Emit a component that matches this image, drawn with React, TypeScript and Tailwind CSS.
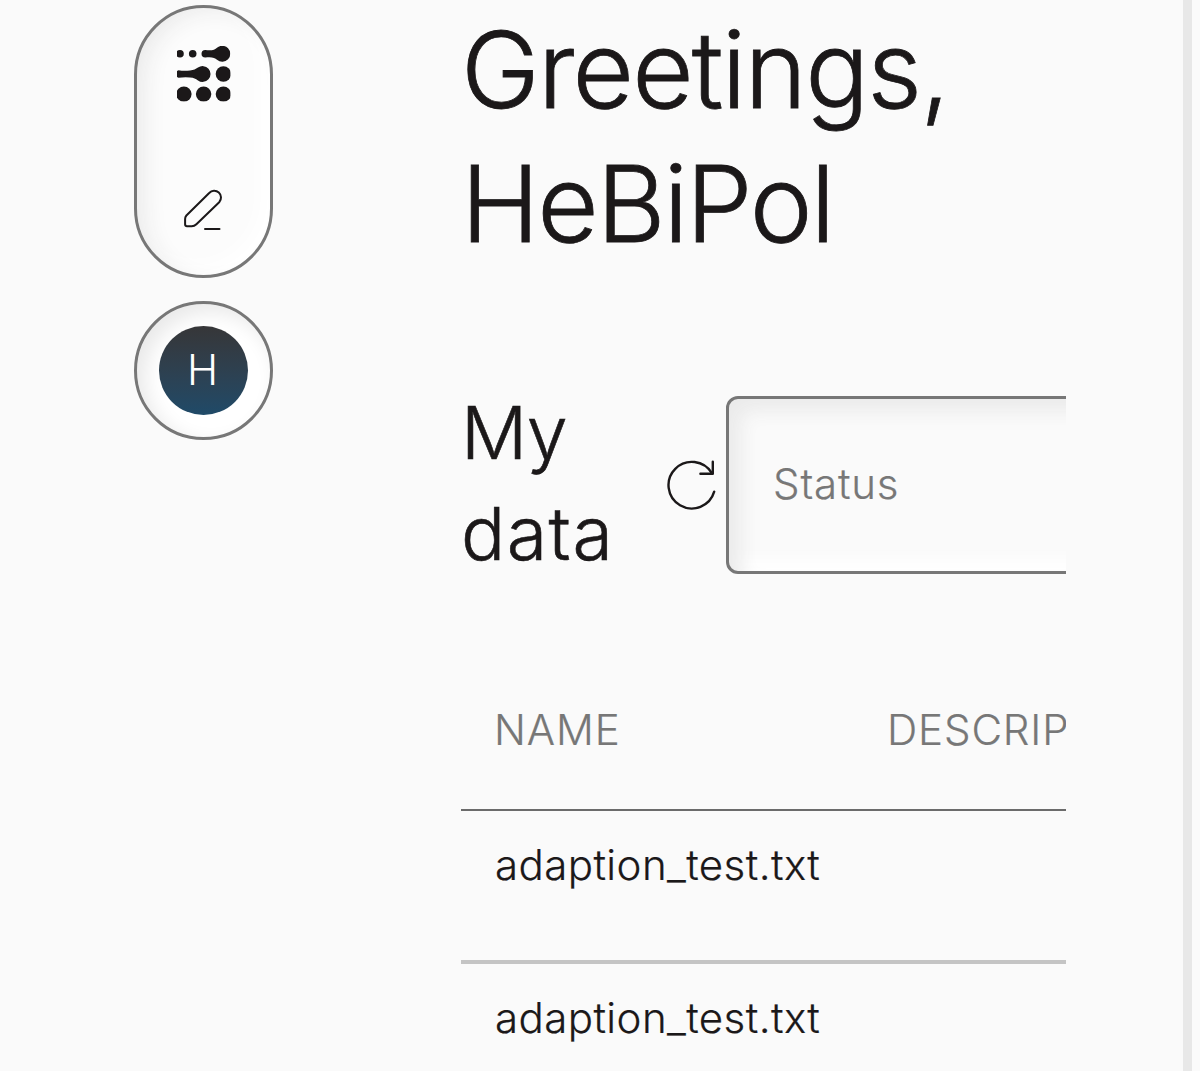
import React from "react";

interface DataFile {
  name: string;
  description: string;
}

const files: DataFile[] = [
  { name: "adaption_test.txt", description: "" },
  { name: "adaption_test.txt", description: "" },
];

function Logo() {
  return (
    <svg width="54" height="56" viewBox="0 0 54 56" className="block text-[#1b1819]" fill="currentColor">
      <clipPath id="logo-edge">
        <rect x="0" y="0" width="53.4" height="55.4" rx="1" />
      </clipPath>
      <g clipPath="url(#logo-edge)">
        <circle cx="3" cy="7.8" r="3.8" />
        <circle cx="15.7" cy="7.8" r="3.8" />
        <path d="M28.3 4C34 4.9 38 4 40 1.8A8 8 0 1 1 40 13.8C38 11.6 34 10.7 28.3 11.6A3.8 3.8 0 0 1 28.3 4Z" />
        <path d="M1.5 24.2Q7 25.2 13 24.4C17 24.2 18.5 23.2 21 21.6A7.9 7.9 0 1 1 21 34.4C18.5 32.6 17 31.6 13 31.4Q7 30.8 1.5 31.8L0 31V25Z" />
        <circle cx="46.4" cy="28" r="7.7" />
        <circle cx="6.9" cy="48.1" r="7.7" />
        <circle cx="26.6" cy="48.1" r="7.7" />
        <circle cx="46.4" cy="48.1" r="7.7" />
      </g>
    </svg>
  );
}

function PencilIcon() {
  return (
    <svg
      width="40"
      height="44"
      viewBox="0 0 40 44"
      className="block"
      fill="none"
      stroke="#1b1819"
      strokeWidth="2"
      strokeLinecap="round"
      strokeLinejoin="round"
    >
      <path d="M3.4 27.5L26.2 5A6.5 6.5 0 0 1 36.2 14.2L13.4 36.2Q11.3 38.2 8.7 38.2H4Q2.2 38.2 2.1 36.4V30.9Q2.1 29 3.4 27.5Z" />
      <path d="M22 41H36.5" />
    </svg>
  );
}

function RefreshIcon() {
  return (
    <svg
      width="52"
      height="52"
      viewBox="0 0 52 52"
      className="block"
      fill="none"
      stroke="#1b1819"
      strokeWidth="2.4"
      strokeLinecap="round"
      strokeLinejoin="round"
    >
      <path d="M49.2 33.7A23.3 23.3 0 1 1 46.8 15.2" />
      <path d="M47.8 3.7V15.7H35.4" />
    </svg>
  );
}

function Sidebar() {
  return (
    <nav className="flex w-[139px] shrink-0 flex-col gap-[23px] pt-[5px]">
      <div className="flex h-[273px] flex-col items-center rounded-full border-3 border-[#777] bg-[#fcfcfc] pt-[38px] shadow-[inset_12px_6px_24px_-6px_#e9e9e9,inset_-9px_-9px_20px_#fff]">
        <Logo />
        <div className="mt-[86px] mr-[2px]">
          <PencilIcon />
        </div>
      </div>
      <div className="flex h-[139px] items-center justify-center rounded-full border-3 border-[#777] bg-white shadow-[inset_8px_8px_20px_#e9e9e9]">
        <div className="flex size-[89px] items-center justify-center rounded-full bg-linear-to-b from-[#363638] to-[#1f4a68] pr-[2px] pb-[2px] text-[42px] leading-none font-light text-white">
          H
        </div>
      </div>
    </nav>
  );
}

function DataTable() {
  return (
    <div className="mt-[65px] w-[900px] text-[42px] font-light">
      <div className="flex h-[162px] items-center border-b-2 border-[#6b6b6b] pl-[33px] text-[#777] [-webkit-text-stroke:0.2px]">
        <span className="w-[393px] shrink-0 tracking-[0.021em]">NAME</span>
        <span className="tracking-[0.021em]">DESCRIPTION</span>
      </div>
      {files.map((file, i) => (
        <div
          key={i}
          className="flex h-[153px] border-b-4 border-[#c4c4c4] pt-[27px] pl-[34px] leading-[54px] text-[#1b1819] [-webkit-text-stroke:0.2px]"
        >
          <span className="w-[393px] shrink-0 tracking-[0.010em]">{file.name}</span>
          <span>{file.description}</span>
        </div>
      ))}
    </div>
  );
}

export default function App() {
  return (
    <div className="flex h-[1071px] w-[1200px] overflow-hidden bg-[#fafafa] pl-[134px] font-['Inter',sans-serif] text-[#1b1819]">
      <Sidebar />
      <main className="ml-[188px] w-[605px] shrink-0 overflow-hidden pt-[3px]">
        <h1 className="w-[560px] text-[106px] leading-[134px] font-light tracking-[-0.020em] [-webkit-text-stroke:0.8px]">
          <span className="tracking-[-0.017em]">Greetings,</span>
          <br />
          HeBiPol
        </h1>

        <div className="mt-[112px] flex w-[900px] items-center">
          <h2 className="w-[204px] shrink-0 text-[73.5px] leading-[100.5px] font-light tracking-[-0.010em] [-webkit-text-stroke:0.6px]">
            My
            <br />
            <span className="tracking-[0.020em]">data</span>
          </h2>
          <RefreshIcon />
          <div className="relative top-[1px] ml-[9px] flex h-[178px] flex-1 items-center rounded-[12px] border-3 border-[#777] pb-[2px] pl-[44px] text-[42px] font-light tracking-[0.020em] text-[#777] shadow-[inset_12px_12px_18px_#ebebeb,inset_-12px_-12px_18px_#fff] [-webkit-text-stroke:0.2px]">
            Status
          </div>
        </div>

        <DataTable />
      </main>
      <div className="ml-auto w-[17px] shrink-0 border-l-[9px] border-[#e8e8e8] bg-[#fbfbfb]" />
    </div>
  );
}
